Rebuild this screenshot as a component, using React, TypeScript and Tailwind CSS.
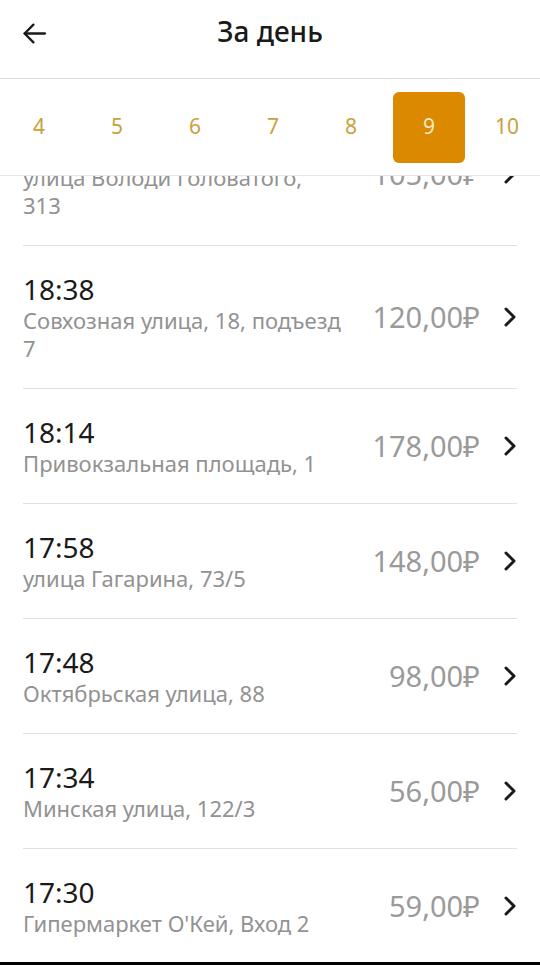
const days = [4, 5, 6, 7, 8, 9, 10];

const rides = [
  { time: "18:52", address: "улица Володи Головатого,\n313", price: "105,00₽" },
  { time: "18:38", address: "Совхозная улица, 18, подъезд 7", price: "120,00₽" },
  { time: "18:14", address: "Привокзальная площадь, 1", price: "178,00₽" },
  { time: "17:58", address: "улица Гагарина, 73/5", price: "148,00₽" },
  { time: "17:48", address: "Октябрьская улица, 88", price: "98,00₽" },
  { time: "17:34", address: "Минская улица, 122/3", price: "56,00₽" },
  { time: "17:30", address: "Гипермаркет О'Кей, Вход 2", price: "59,00₽" },
];

function BackArrow() {
  return (
    <svg width="25" height="25" viewBox="0 0 24 24" fill="none" stroke="#1a1a1a" strokeWidth="2.2" strokeLinecap="round" strokeLinejoin="round">
      <path d="M22 12H2.5" />
      <path d="M11 3.5 2.5 12l8.5 8.5" />
    </svg>
  );
}

function Chevron() {
  return (
    <svg width="14" height="22" viewBox="0 0 14 22" fill="none" stroke="#1a1a1a" strokeWidth="3" strokeLinecap="round" strokeLinejoin="round">
      <path d="M3 3l8 8-8 8" />
    </svg>
  );
}

export default function App() {
  return (
    <div
      className="w-[540px] h-[965px] bg-white flex flex-col overflow-hidden"
      style={{ fontFamily: '"Noto Sans", "Open Sans", sans-serif' }}
    >
      {/* header */}
      <div className="h-[79px] shrink-0 border-b border-[#dcdcdc]">
        <div className="h-[66px] flex items-center px-[22px] relative">
          <BackArrow />
          <div className="absolute inset-0 pb-[4px] flex items-center justify-center text-[28px] font-medium text-[#1a1a1a]">
            За день
          </div>
        </div>
      </div>
      {/* days */}
      <div className="h-[97px] shrink-0 flex items-center border-b border-[#e6e6e6]">
        {days.map((d) => (
          <div key={d} className="w-[78px] shrink-0 flex justify-center">
            {d === 9 ? (
              <div className="w-[72px] h-[71px] rounded-[6px] bg-[#db8a00] flex items-center justify-center text-[21px] text-[#f7e7c4]">
                {d}
              </div>
            ) : (
              <div className="h-[71px] flex items-center text-[21px] text-[#c9a13c]">{d}</div>
            )}
          </div>
        ))}
      </div>
      {/* list */}
      <div className="flex-1 overflow-hidden">
        <div className="-mt-[73px] px-[23px]">
          {rides.map((r, i) => (
            <div key={i} className="flex items-center border-b border-[#e0e0e0] pt-[26px] pb-[26px]">
              <div className="flex-1 min-w-0">
                <div className="text-[28px] leading-[34px] text-[#1a1a1a]">{r.time}</div>
                <div className="text-[22px] leading-[28px] text-[#929292] whitespace-pre-line">{r.address}</div>
              </div>
              <div className="w-[124px] text-right text-[29px] text-[#9a9a9a] shrink-0">{r.price}</div>
              <div className="ml-[23px] shrink-0">
                <Chevron />
              </div>
            </div>
          ))}
        </div>
      </div>
      <div className="h-[3px] shrink-0 bg-black" />
    </div>
  );
}
